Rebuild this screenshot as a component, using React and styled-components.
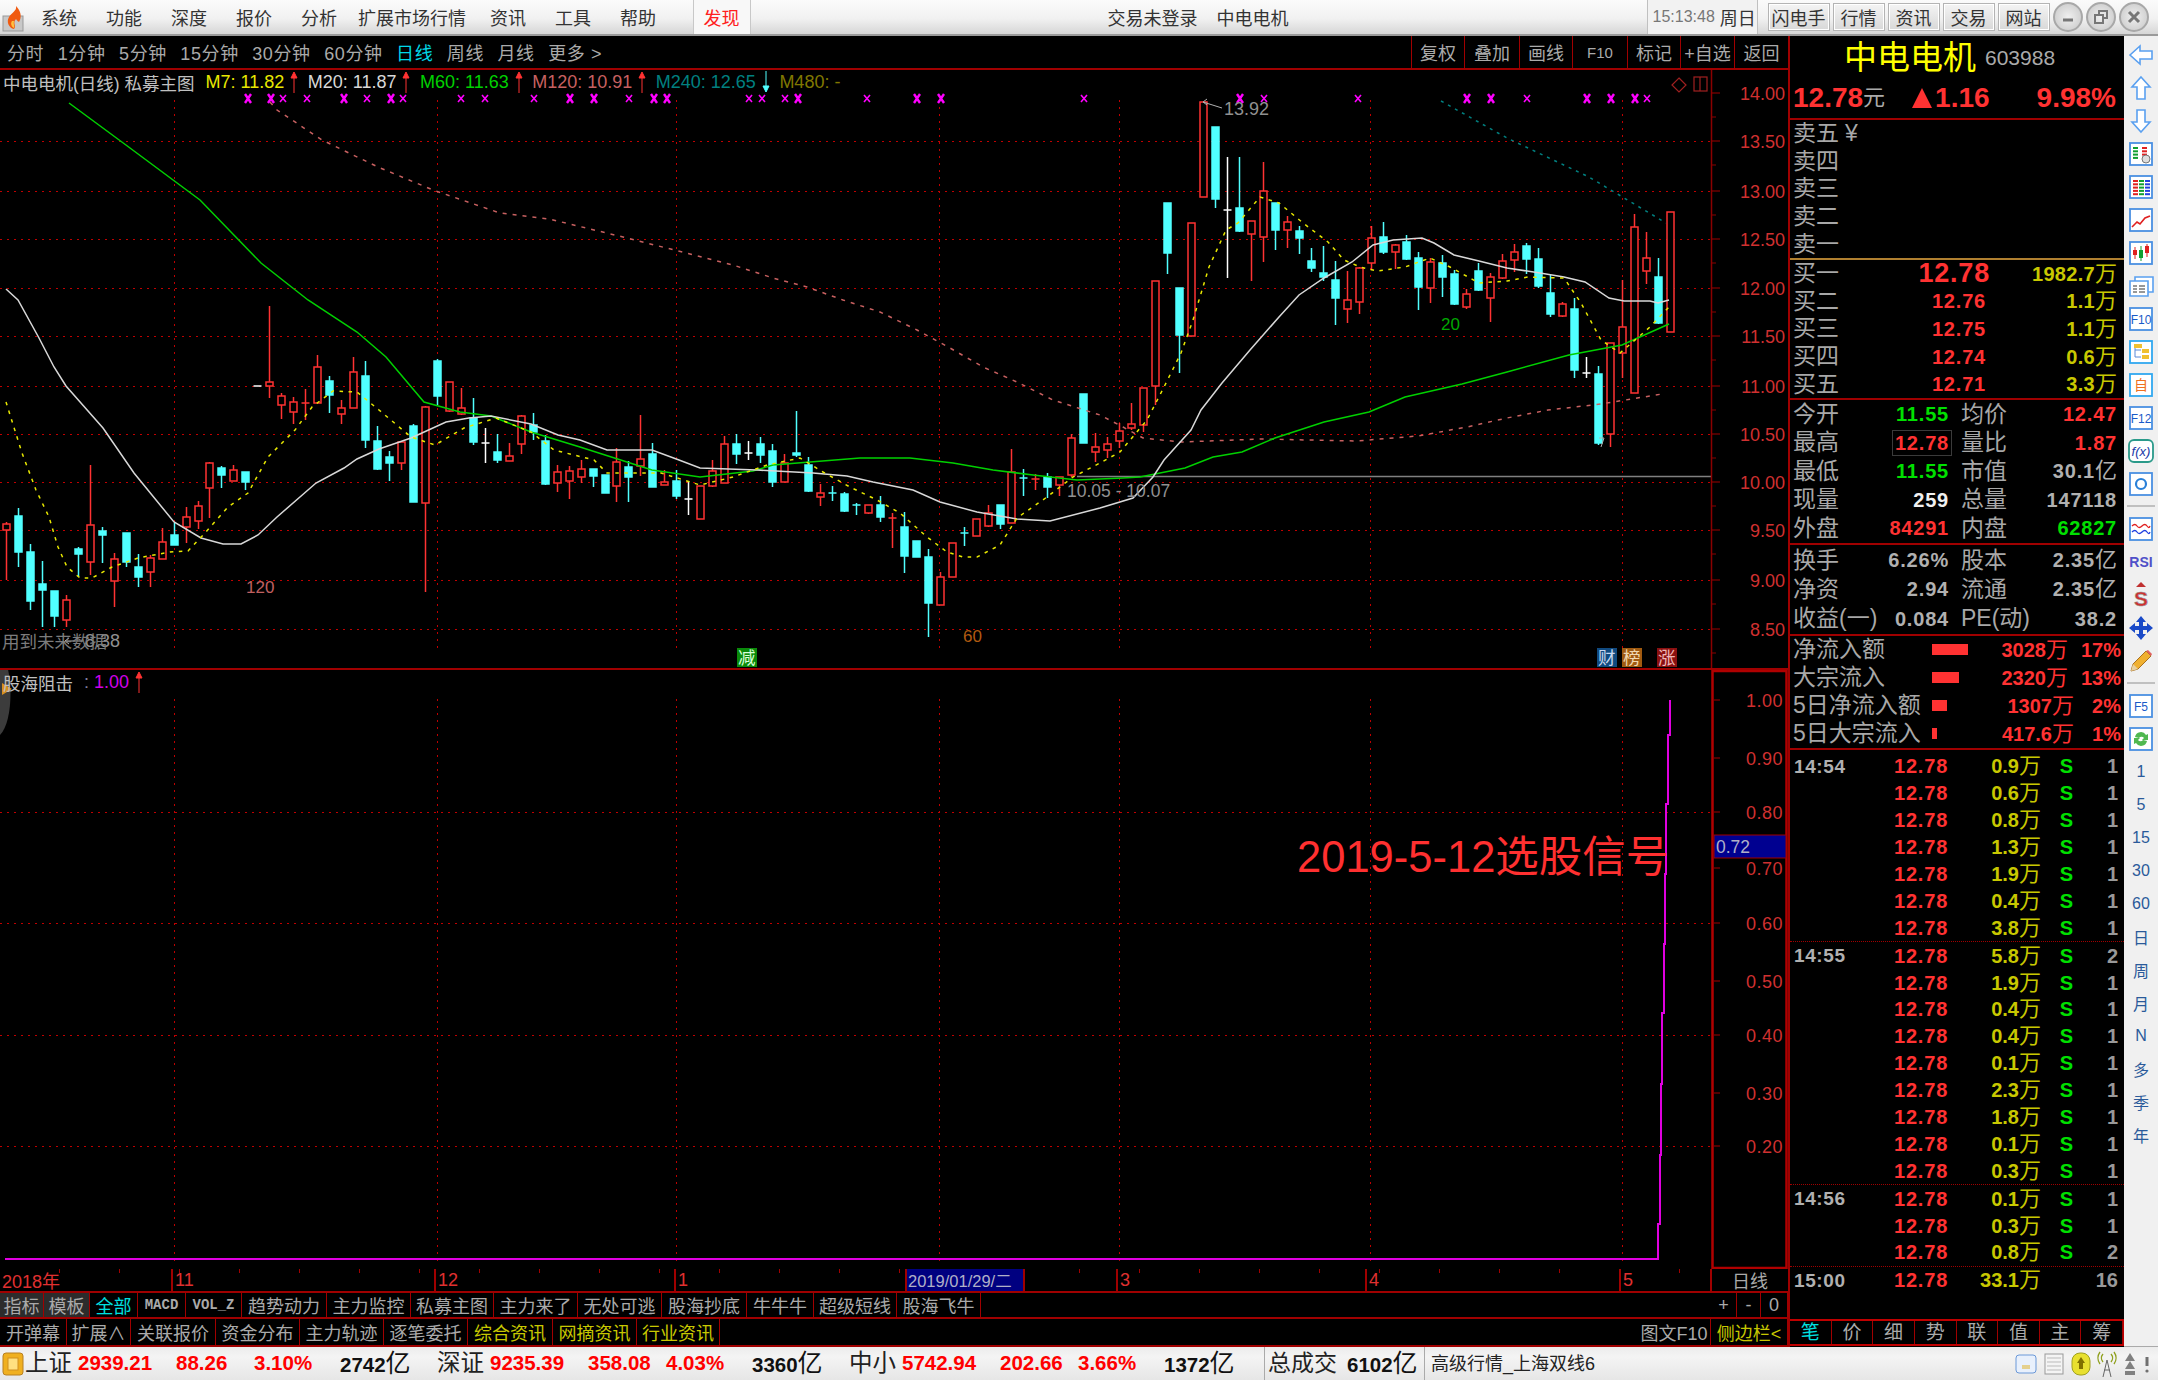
import React from 'react';
import styled, { createGlobalStyle } from 'styled-components';

const SANS = '"Liberation Sans", "Noto Sans CJK SC", sans-serif';
const LINE = '#a00000';
const RED = '#ff3232';
const CYAN = '#50ffff';

const GlobalStyle = createGlobalStyle`
  html, body { margin: 0; padding: 0; background: #000; }
  body { font-family: ${SANS}; overflow: hidden; }
  * { box-sizing: border-box; }
`;

// r = red hollow, c = cyan filled, w = white. [kind, wickTop, bodyTop, bodyBottom, wickBottom]
const CANDLES = [
  ['r',522,524,530,580],['c',508,516,552,567],['c',544,552,601,610],['c',561,584,590,627],['c',591,591,616,627],
  ['r',595,600,620,627],['c',547,549,554,577],['r',465,525,562,575],['c',527,531,535,563],['r',553,559,581,607],
  ['c',533,533,562,567],['c',554,567,577,587],['r',555,558,572,587],['r',528,542,559,559],['c',523,535,545,545],
  ['r',507,517,527,543],['r',501,506,521,529],['r',462,463,488,518],['c',466,468,475,488],['r',465,470,481,481],
  ['c',472,472,482,490],['w',386,386,386,386],['r',306,382,386,398],['r',393,396,405,419],['r',397,402,412,424],
  ['r',389,403,403,420],['r',355,367,403,403],['c',376,381,395,413],['r',400,408,414,424],['r',357,372,408,408],
  ['c',361,376,440,448],['c',426,441,469,470],['c',451,457,463,481],['r',442,442,463,470],['c',424,426,502,502],
  ['r',406,407,503,592],['c',359,361,396,405],['r',382,382,411,412],['r',388,408,414,415],['c',398,418,442,445],
  ['w',428,443,443,463],['c',434,452,460,463],['r',443,456,461,461],['r',415,416,444,454],['c',413,425,432,440],
  ['c',435,441,484,485],['r',465,472,483,492],['r',466,471,481,499],['r',460,469,477,483],['c',469,469,476,487],
  ['c',475,475,493,493],['r',448,462,486,502],['c',461,467,477,502],['r',415,459,466,476],['c',443,454,487,487],
  ['r',470,482,485,485],['c',470,481,496,499],['w',481,499,499,515],['r',486,486,519,519],['r',460,471,486,487],
  ['r',436,444,483,483],['c',434,444,454,464],['w',441,453,453,460],['c',437,444,455,463],['c',444,451,482,487],
  ['r',454,463,482,482],['c',411,453,455,457],['c',457,465,491,492],['r',484,493,497,506],['c',486,493,493,501],
  ['c',492,494,511,512],['c',503,505,505,515],['r',505,505,513,514],['c',496,505,517,522],['r',513,518,518,548],
  ['c',512,527,556,573],['c',541,541,557,557],['c',549,557,603,637],['r',572,577,605,605],['r',543,543,577,577],
  ['c',527,533,533,546],['r',519,519,536,536],['r',505,513,526,527],['c',505,505,524,529],['r',449,472,523,523],
  ['c',469,478,478,496],['r',474,479,479,490],['c',473,477,487,498],['r',477,477,485,496],['r',434,438,475,477],
  ['c',394,394,443,443],['r',433,447,452,462],['r',437,444,450,458],['r',423,431,441,448],['r',403,424,428,430],
  ['r',388,388,425,432],['r',281,281,386,405],['c',203,203,253,274],['c',288,288,335,373],['r',223,223,336,336],
  ['r',102,102,197,197],['c',127,127,199,208],['w',157,210,210,278],['c',157,208,231,232],['r',221,221,234,281],
  ['r',162,191,237,262],['c',203,203,230,250],['r',216,222,230,248],['c',226,231,238,254],['c',248,261,268,272],
  ['c',246,273,277,281],['c',261,280,298,325],['r',271,300,309,323],['r',267,268,302,314],['r',226,238,263,270],
  ['c',222,237,252,254],['r',244,245,252,269],['c',235,242,259,260],['c',252,258,287,310],['r',258,262,288,303],
  ['c',255,263,277,297],['c',270,274,304,305],['r',289,294,307,309],['c',263,271,290,291],['r',273,277,298,322],
  ['r',254,261,278,279],['r',244,252,260,272],['c',243,246,259,274],['c',248,259,286,288],['c',275,293,314,317],
  ['r',302,304,316,317],['c',298,309,370,378],['w',357,373,373,378],['c',366,374,443,445],['r',343,343,434,447],
  ['r',280,327,353,378],['r',214,227,393,393],['r',232,258,271,284],['c',258,277,323,324],['r',212,212,332,332],
];

const M7 = [[6,402],[22,453],[36,490],[49,517],[58,547],[67,567],[80,578],[92,578],[112,567],[138,558],[170,552],[188,551],[205,533],[228,507],[248,493],[268,457],[295,430],[312,407],[333,391],[357,392],[379,410],[411,437],[435,445],[464,428],[496,418],[531,432],[554,450],[594,460],[607,473],[661,473],[700,485],[733,477],[767,465],[800,458],[823,472],[850,487],[877,500],[900,513],[927,537],[947,552],[963,557],[977,557],[1000,545],[1017,518],[1047,497],[1073,477],[1100,463],[1120,452],[1147,420],[1164,387],[1181,353],[1193,320],[1209,267],[1226,230],[1238,223],[1260,197],[1279,203],[1303,223],[1328,242],[1344,260],[1360,267],[1377,271],[1405,267],[1430,258],[1450,267],[1479,283],[1507,281],[1528,277],[1564,278],[1581,303],[1601,340],[1620,353],[1650,327],[1669,307]];
const M20 = [[6,289],[18,300],[39,338],[54,367],[66,386],[103,428],[134,473],[174,522],[201,538],[223,544],[241,544],[258,535],[277,517],[316,483],[344,468],[357,459],[379,449],[411,438],[446,422],[469,418],[491,416],[531,424],[558,435],[580,440],[607,450],[652,450],[679,460],[700,468],[757,470],[813,473],[847,476],[873,482],[913,490],[940,502],[977,512],[1017,519],[1050,521],[1100,508],[1133,498],[1153,477],[1164,460],[1191,430],[1201,410],[1222,383],[1250,350],[1279,317],[1299,295],[1324,278],[1352,262],[1373,245],[1393,240],[1422,238],[1434,243],[1454,255],[1479,261],[1507,268],[1540,273],[1564,277],[1585,282],[1609,298],[1624,301],[1650,301],[1658,303],[1669,300]];
const M60 = [[69,103],[130,148],[200,200],[261,263],[308,300],[357,332],[386,357],[424,402],[460,412],[491,416],[531,432],[580,447],[652,470],[700,477],[753,471],[773,465],[810,462],[860,458],[910,458],[953,463],[993,470],[1033,475],[1077,480],[1123,478],[1140,477],[1185,468],[1213,457],[1242,452],[1275,438],[1324,422],[1369,412],[1405,397],[1462,384],[1507,372],[1569,355],[1622,345],[1669,324]];
const M120 = [[270,102],[277,110],[322,140],[378,167],[433,190],[500,213],[549,219],[623,237],[690,254],[733,265],[773,278],[807,287],[843,300],[880,312],[917,330],[950,348],[983,367],[1017,382],[1053,400],[1100,415],[1123,427],[1143,438],[1181,442],[1262,439],[1356,441],[1418,436],[1467,427],[1507,418],[1548,410],[1601,404],[1662,394]];
const M240 = [[1441,101],[1507,138],[1589,177],[1666,223]];
const SIGNAL = [[5,1259],[1658,1259],[1658,1224],[1660,1224],[1660,1155],[1661,1155],[1661,1084],[1662,1084],[1662,1013],[1664,1013],[1664,944],[1665,944],[1665,874],[1666,874],[1666,804],[1668,804],[1668,735],[1670,735],[1670,700]];

const MARKS = [[248,1],[271,1],[283,0],[307,0],[344,1],[367,0],[391,1],[403,0],[461,0],[485,0],[534,0],[570,1],[594,1],[629,0],[654,1],[667,1],[749,0],[762,0],[785,0],[798,1],[867,0],[917,1],[941,1],[1084,0],[1240,1],[1264,0],[1358,0],[1467,1],[1491,1],[1527,0],[1587,1],[1611,1],[1635,1],[1647,0]];
const GRID_X = [174, 437, 676, 939, 1119, 1370, 1622];
const PRICE_TICKS = [['14.00',93],['13.50',141],['13.00',191],['12.50',239],['12.00',288],['11.50',336],['11.00',386],['10.50',434],['10.00',482],['9.50',530],['9.00',580],['8.50',629]];
const SIGNAL_TICKS = [['1.00',700],['0.90',758],['0.80',812],['0.70',868],['0.60',923],['0.50',981],['0.40',1035],['0.30',1093],['0.20',1146]];

const toPoints = (line) => line.map((p) => p.join(',')).join(' ');

const Candle = ({ data, index }) => {
  const [kind, wickTop, top, bottom, wickBottom] = data;
  const x = Math.round(6 + 11.97 * index) + 0.5;
  const color = kind === 'r' ? RED : kind === 'c' ? CYAN : '#ffffff';
  const w = 3.5;
  if (top === bottom) {
    return (
      <g stroke={color} strokeWidth="1.5">
        <line x1={x} x2={x} y1={wickTop} y2={wickBottom} />
        <line x1={x - w - 0.5} x2={x + w + 0.5} y1={top} y2={top} />
      </g>
    );
  }
  return (
    <g stroke={color} strokeWidth="1.5">
      <line x1={x} x2={x} y1={wickTop} y2={top} />
      <line x1={x} x2={x} y1={bottom} y2={wickBottom} />
      <rect
        x={x - w}
        y={top}
        width={w * 2}
        height={bottom - top}
        fill={kind === 'r' ? '#000' : color}
      />
    </g>
  );
};

const Root = styled.div`
  width: 2158px;
  height: 1380px;
  display: flex;
  flex-direction: column;
  background: #000;
`;

/* top menu */
const MenuBar = styled.header`
  height: 36px;
  display: flex;
  align-items: stretch;
  background: linear-gradient(#fbfbfb, #f1f1f1 55%, #d6d6d6);
  border-bottom: 2px solid #9a9a9a;
  color: #333;
  font-size: 18px;
`;
const LogoBox = styled.div`
  width: 26.5px;
  padding: 6px 0 0 2px;
`;
const MenuItem = styled.div`
  display: flex;
  align-items: center;
  padding: 0 ${(p) => p.$right ?? 14.5}px 0 ${(p) => p.$left ?? 14.5}px;
  white-space: nowrap;
`;
const Discover = styled(MenuItem)`
  margin-left: 22px;
  padding: 0 10px;
  width: 58px;
  color: #ff2020;
  background: #f8f8f8;
  border-left: 1px solid #c8c8c8;
  border-right: 1px solid #c8c8c8;
`;
const Title = styled.div`
  margin-left: 357px;
  width: 539px;
  display: flex;
  align-items: center;
  gap: 19px;
  white-space: nowrap;
`;
const Clock = styled.div`
  width: 111px;
  display: flex;
  align-items: center;
  gap: 5px;
  padding-left: 5px;
  border-left: 1px solid #c0c0c0;
  border-right: 1px solid #c0c0c0;
  background: #f2f2f2;
  span { color: #777; font-size: 16px; }
`;
const RaisedGroup = styled.div`
  margin-left: 10px;
  display: flex;
  align-items: center;
  gap: 3px;
`;
const Raised = styled.div`
  width: ${(p) => p.$w}px;
  height: 28px;
  display: flex;
  align-items: center;
  justify-content: center;
  background: linear-gradient(#f4f4f4, #d8d8d8);
  border: 1px solid #b4b4b4;
  box-shadow: inset 0 0 0 1px #fff;
`;
const WindowGroup = styled.div`
  margin-left: 3px;
  display: flex;
  align-items: center;
  gap: 3px;
`;
const WindowBtn = styled.div`
  width: 30px;
  height: 30px;
  border-radius: 50%;
  display: flex;
  align-items: center;
  justify-content: center;
  background: radial-gradient(#f0f0f0, #c6c6c6);
  border: 2px solid #a8a8a8;
`;

/* body */
const Body = styled.div`
  height: 1311px;
  display: flex;
`;
const Workspace = styled.section`
  width: 1788px;
  display: flex;
  flex-direction: column;
`;
const PeriodBar = styled.div`
  height: 34px;
  display: flex;
  justify-content: space-between;
  border-bottom: 2px solid ${LINE};
  font-size: 18px;
  color: #aaa;
`;
const Periods = styled.div`
  display: flex;
  align-items: center;
  gap: 13.5px;
  padding-left: 7px;
  letter-spacing: 0.6px;
`;
const Period = styled.span`
  color: ${(p) => (p.$active ? '#00d8e8' : '#aaa')};
  white-space: nowrap;
`;
const ChartTools = styled.div`
  display: flex;
`;
const ChartTool = styled.div`
  width: ${(p) => p.$w}px;
  display: flex;
  align-items: center;
  justify-content: center;
  border-left: 1px solid ${LINE};
  white-space: nowrap;
  font-size: ${(p) => (p.$small ? 15 : 18)}px;
`;
const Pane = styled.div`
  position: relative;
  height: ${(p) => p.$h}px;
  border-bottom: ${(p) => (p.$ruled ? `2px solid ${LINE}` : 'none')};
`;
const PaneSvg = styled.svg`
  display: block;
  width: 1788px;
  height: 100%;
  text {
    font-family: ${SANS};
  }
`;
const Legend = styled.div`
  position: absolute;
  left: 3px;
  top: 1px;
  height: 22px;
  display: flex;
  align-items: center;
  font-size: 18px;
  white-space: nowrap;
`;
const LegendTitle = styled.span`
  color: #c0c0c0;
  font-size: 17.5px;
  margin-right: 11px;
`;
const LegendValue = styled.span`
  color: ${(p) => p.$color};
  margin-right: ${(p) => p.$after || 0}px;
`;
const ArrowSvg = styled.svg`
  width: 8px;
  height: 22px;
  margin: 0 9.5px 0 6px;
`;
const SignalText = styled.div`
  position: absolute;
  left: 1297px;
  top: 162px;
  color: #ff3030;
  font-size: 43.5px;
  line-height: 50px;
  white-space: nowrap;
`;
const FutureNote = styled.div`
  position: absolute;
  left: 2px;
  top: 558px;
  color: #7c7c7c;
  font-size: 17.5px;
  white-space: nowrap;
`;

const DateAxis = styled.div`
  height: 24px;
  display: flex;
  border-bottom: 2px solid ${LINE};
  background: repeating-linear-gradient(90deg, transparent 0 59px, ${LINE} 59px 60px) 0 0 / 1711px 4px no-repeat;
`;
const DateCell = styled.div`
  width: ${(p) => p.$w}px;
  padding-left: 2px;
  display: flex;
  align-items: center;
  color: #e03030;
  font-size: 18px;
  white-space: nowrap;
  border-right: 2px solid ${LINE};
`;
const DateSelected = styled(DateCell)`
  background: #000080;
  color: #b0b0c8;
  font-size: 16.5px;
  padding-left: 1px;
`;
const AxisName = styled(DateCell)`
  color: #aaa;
  justify-content: center;
  padding: 0;
  border-right: none;
`;
const TabRow = styled.div`
  height: ${(p) => p.$h}px;
  display: flex;
  justify-content: space-between;
  border-bottom: 2px solid ${LINE};
`;
const TabGroup = styled.div`
  display: flex;
`;
const Tab = styled.div`
  width: ${(p) => p.$w}px;
  display: flex;
  align-items: center;
  justify-content: center;
  font-family: ${(p) => (p.$small ? '"Liberation Mono", monospace' : 'inherit')};
  font-size: ${(p) => (p.$small ? 14 : 18)}px;
  font-weight: ${(p) => (p.$small ? 700 : 400)};
  white-space: nowrap;
  color: ${(p) => (p.$tone === 'cyan' ? '#00e0e0' : p.$tone === 'yellow' ? '#c8c800' : '#aaa')};
  background: ${(p) => (p.$tone === 'dim' ? '#2c2c2c' : 'transparent')};
  border-right: 1px solid ${LINE};
`;

/* quote panel */
const QuotePanel = styled.aside`
  width: 336px;
  display: flex;
  flex-direction: column;
  border-left: 2px solid ${LINE};
  color: #a8a8a8;
  font-size: 23px;
  line-height: 1;
`;
const NameRow = styled.div`
  height: 42px;
  padding-left: 54px;
  display: flex;
  align-items: center;
  gap: 9px;
  color: #ffff00;
  font-size: 33px;
  white-space: nowrap;
  b { color: #aaa; font-size: 21px; font-weight: 400; }
`;
const PriceRow = styled.div`
  height: 42px;
  padding-left: 3px;
  display: flex;
  align-items: center;
  border-bottom: 2px solid ${LINE};
  color: ${RED};
  font-size: 28px;
  font-weight: 700;
  white-space: nowrap;
`;
const PriceUnit = styled.span`
  color: #aaa;
  font-size: 22px;
  font-weight: 400;
  margin-right: 27px;
`;
const UpTriangle = styled.i`
  width: 0;
  height: 0;
  margin-right: 3px;
  border-left: 10px solid transparent;
  border-right: 10px solid transparent;
  border-bottom: 20px solid ${RED};
`;
const PriceRight = styled.span`
  margin-left: 47px;
`;
const Book = styled.div`
  padding: 0 7px 0 3px;
  border-bottom: 2px solid ${(p) => p.$rule};
`;
const BookRow = styled.div`
  height: 27.6px;
  display: grid;
  grid-template-columns: 52px 141px 1fr;
  align-items: center;
  white-space: nowrap;
`;
const BookPrice = styled.div`
  text-align: right;
  color: ${RED};
  font-weight: 700;
  font-size: ${(p) => (p.$big ? 27 : 20)}px;
  letter-spacing: 0.8px;
  margin-right: ${(p) => (p.$big ? -4 : 0)}px;
`;
const BookVolume = styled.div`
  text-align: right;
  color: #c8c800;
  font-weight: 700;
  font-size: 20px;
  letter-spacing: 0.3px;
`;
const Unit = styled.span`
  font-weight: 400;
  font-size: 22px;
  letter-spacing: 0;
`;
const Stats = styled.div`
  height: ${(p) => p.$h}px;
  padding-left: 3px;
  display: grid;
  grid-template-columns: 156px 156px;
  column-gap: 12px;
  align-content: space-evenly;
  border-bottom: 2px solid ${LINE};
`;
const StatCell = styled.div`
  height: 28px;
  display: flex;
  justify-content: space-between;
  align-items: center;
  white-space: nowrap;
`;
const StatValue = styled.span`
  color: ${(p) => p.$color || '#b0b0b0'};
  font-size: 20px;
  font-weight: 700;
  letter-spacing: 0.8px;
  outline: ${(p) => (p.$boxed ? '1px solid #3a3a3a' : 'none')};
  outline-offset: 2px;
`;
const Flows = styled.div`
  height: 114px;
  padding: 0 3px;
  display: grid;
  align-content: space-evenly;
  border-bottom: 2px solid ${LINE};
`;
const FlowRow = styled.div`
  height: 28px;
  display: flex;
  align-items: center;
  white-space: nowrap;
`;
const FlowLabel = styled.div`
  width: 139px;
  span { font-weight: 700; font-size: 20px; }
`;
const FlowBar = styled.div`
  width: 40px;
  height: 11px;
  div { height: 100%; background: ${RED}; }
`;
const FlowAmount = styled.div`
  width: ${(p) => (p.$wide ? 102 : 96)}px;
  text-align: right;
  color: ${RED};
  font-size: 20px;
  font-weight: 700;
`;
const FlowPct = styled.div`
  flex: 1;
  text-align: right;
  color: ${RED};
  font-size: 20px;
  font-weight: 700;
`;
const TickList = styled.div`
  flex: 1;
  padding-top: 3px;
`;
const TickGroup = styled.div`
  padding: 0 6px 0 4px;
  border-bottom: ${(p) => (p.$last ? 'none' : `1px dotted ${LINE}`)};
`;
const TickRow = styled.div`
  height: 26.9px;
  display: grid;
  grid-template-columns: 102px 52px 93px 32px 1fr;
  align-items: center;
  font-size: 20px;
  font-weight: 700;
  white-space: nowrap;
`;
const TickTime = styled.div`
  color: #b0b0b0;
  font-size: 19px;
  letter-spacing: 0.6px;
`;
const TickPrice = styled.div`
  color: ${RED};
  letter-spacing: 0.8px;
  margin-left: -2px;
`;
const TickVolume = styled.div`
  text-align: right;
  color: #c8c800;
`;
const TickSide = styled.div`
  text-align: right;
  color: #00e000;
`;
const TickCount = styled.div`
  text-align: right;
  color: #999;
`;
const PanelTabs = styled.div`
  height: 27px;
  margin-bottom: 1px;
  display: flex;
  border-top: 2px solid #c00000;
  border-bottom: 2px solid #c00000;
  border-right: 1px solid #c00000;
`;
const PanelTab = styled.div`
  flex: 1;
  display: flex;
  align-items: center;
  justify-content: center;
  font-size: 19px;
  color: ${(p) => (p.$active ? '#00e0e0' : '#aaa')};
  border-right: 1px solid ${LINE};
`;

/* right icon strip */
const SideTools = styled.nav`
  width: 34px;
  padding-top: 2px;
  background: #f0f0f0;
  border-bottom: 1px solid #aaa;
`;
const SideItem = styled.div`
  height: 33px;
  display: flex;
  align-items: center;
  justify-content: center;
  color: #2a5a9a;
  font-size: 16px;
  svg { display: block; }
  svg text { font-family: ${SANS}; }
`;
const SideRule = styled.div`
  height: 12px;
  display: flex;
  align-items: center;
  &::after { content: ''; width: 100%; margin: 0 3px; border-top: 2px solid #c0c0c0; }
`;

/* status bar */
const StatusBar = styled.footer`
  height: 33px;
  padding-left: 2px;
  display: flex;
  align-items: center;
  background: linear-gradient(#ececec, #f4f4f4 30%, #e6e6e6);
  color: #222;
  white-space: nowrap;
  line-height: 1;
`;
const IndexBlock = styled.div`
  display: grid;
  grid-template-columns: 53px 98px 78px 86px 97px;
  align-items: center;
  font-weight: 700;
  font-size: 20.5px;
`;
const IndexName = styled.span`
  font-size: 23.5px;
  font-weight: 400;
`;
const RedNum = styled.span`
  color: #ff0000;
`;
const DarkNum = styled.span`
  color: #111;
  font-weight: 700;
  font-size: 20.5px;
  span { font-weight: 400; font-size: 25px; }
`;
const TotalBlock = styled.div`
  display: flex;
  align-items: center;
  gap: 10px;
  width: 161px;
  padding-left: 3px;
  height: 100%;
  font-size: 23px;
  border-left: 1px solid #aaa;
  border-right: 1px solid #aaa;
  margin-left: 3px;
`;
const FeedName = styled.div`
  margin-left: 6px;
  width: 584px;
  font-size: 18px;
`;
const Tray = styled.div`
  display: flex;
  align-items: center;
  gap: 6px;
`;

const Logo = () => (
  <svg width="24" height="26" viewBox="0 0 24 26">
    <rect x="1" y="10" width="20" height="15" fill="#c8c8c8" stroke="#999" />
    <path d="M14 0c1 5-4 6-7 11-3 5 0 11 5 12 3-3-2-6 2-10 1 2 3 3 3 3 3-5 2-11-3-16z" fill="#f05a10" />
    <path d="M10 15c-2 3 0 6 2 7 1-2-1-4 0-7z" fill="#ffc040" />
  </svg>
);

const Arrow = ({ up = true }) => (
  <ArrowSvg viewBox="0 0 8 22">
    {up ? (
      <g fill={RED} stroke={RED}>
        <path d="M4 7V22" fill="none" />
        <path d="M4 1L7 7H1z" />
      </g>
    ) : (
      <g fill={CYAN} stroke={CYAN}>
        <path d="M4 0V15" fill="none" />
        <path d="M4 21L7 15H1z" />
      </g>
    )}
  </ArrowSvg>
);

const MainChart = () => (
  <PaneSvg viewBox="0 70 1788 598" preserveAspectRatio="none">
    <g stroke="#c00000" strokeDasharray="2 5" shapeRendering="crispEdges">
      {PRICE_TICKS.slice(1).map(([label, y]) => (
        <line key={label} x1="0" x2="1711" y1={y} y2={y} />
      ))}
      {GRID_X.map((x) => (
        <line key={x} x1={x} x2={x} y1="100" y2="648" />
      ))}
    </g>
    <line x1="1077" x2="1712" y1="476.5" y2="476.5" stroke="#808080" strokeWidth="1.5" />
    {CANDLES.map((c, i) => (
      <Candle key={i} data={c} index={i} />
    ))}
    <polyline points={toPoints(M120)} fill="none" stroke="#c86060" strokeWidth="1.5" strokeDasharray="4 6" />
    <polyline points={toPoints(M240)} fill="none" stroke="#008080" strokeWidth="1.5" strokeDasharray="3 5" />
    <polyline points={toPoints(M60)} fill="none" stroke="#00d000" strokeWidth="1.5" />
    <polyline points={toPoints(M20)} fill="none" stroke="#d8d8d8" strokeWidth="1.5" />
    <polyline points={toPoints(M7)} fill="none" stroke="#e8e800" strokeWidth="1.5" strokeDasharray="3.5 5.5" />
    <g stroke="#ff00ff">
      {MARKS.map(([x, big]) => (
        <path
          key={x}
          strokeWidth={big ? 2.4 : 1.6}
          d={`M${x - 3} ${big ? 94 : 95}L${x + 3} ${big ? 103 : 102}M${x + 3} ${big ? 94 : 95}L${x - 3} ${big ? 103 : 102}`}
        />
      ))}
    </g>
    <g fill="#909090" fontSize="18">
      <text x="1224" y="115">13.92</text>
      <text x="1067" y="497" fontSize="17.5">10.05 - 10.07</text>
      <text x="85" y="647">8.38</text>
    </g>
    <g stroke="#b0b0b0" fill="none">
      <path d="M1222 108L1203 102M1203 102l4-3M1203 102l4 3" />
      <path d="M1601 447l3-9h-5M83 641H65M65 641l4-3M65 641l4 3" />
    </g>
    <text x="246" y="593" fill="#c06060" fontSize="17">120</text>
    <text x="963" y="642" fill="#b05a10" fontSize="17">60</text>
    <text x="1441" y="330" fill="#00a800" fontSize="17">20</text>
    {[
      [737, '#0a8a0a', '减', '#d8ffd8'],
      [1597, '#104a80', '财', '#c8d8f0'],
      [1622, '#a05a10', '榜', '#f0d8b0'],
      [1657, '#8a1010', '涨', '#f0b8b8'],
    ].map(([x, bg, label, fg]) => (
      <g key={x}>
        <rect x={x} y="648" width="20" height="19" fill={bg} />
        <text x={x + 1} y="664" fontSize="17.5" fill={fg}>{label}</text>
      </g>
    ))}
    <g fill="none" stroke="#a02020" strokeWidth="1.2">
      <path d="M1679 78l7 7-7 7-7-7z" />
      <rect x="1694" y="77" width="13" height="14" />
      <path d="M1700 77v14" />
    </g>
    <line x1="1711.5" x2="1711.5" y1="70" y2="668" stroke="#8a0000" strokeWidth="1.5" />
    {PRICE_TICKS.map(([label, y]) => (
      <g key={label}>
        <line x1="1712" x2="1720" y1={y} y2={y} stroke="#a00000" />
        <line x1="1712" x2="1716" y1={y + 24} y2={y + 24} stroke="#8a0000" />
        <text x="1785" y={y + 7} textAnchor="end" fontSize="18" fill="#d03030">{label}</text>
      </g>
    ))}
  </PaneSvg>
);

const SignalChart = () => (
  <PaneSvg viewBox="0 670 1788 599" preserveAspectRatio="none">
    <g stroke="#c00000" strokeDasharray="2 5" shapeRendering="crispEdges">
      {[812, 923, 1035, 1146].map((y) => (
        <line key={y} x1="0" x2="1711" y1={y} y2={y} />
      ))}
      {GRID_X.map((x) => (
        <line key={x} x1={x} x2={x} y1="699" y2="1264" />
      ))}
    </g>
    <polyline points={toPoints(SIGNAL)} fill="none" stroke="#e000e0" strokeWidth="2" />
    <path d="M0 651c14 16 14 70 0 84z" fill="#3c3c3c" />
    <path d="M2 683l10 6-10 6z" fill="#d89020" />
    <rect x="1712.5" y="671" width="74" height="597" fill="none" stroke="#b00000" strokeWidth="2.5" />
    {SIGNAL_TICKS.map(([label, y]) => (
      <g key={label}>
        <line x1="1714" x2="1720" y1={y} y2={y} stroke="#a00000" />
        <text x="1783" y={y + 7} textAnchor="end" fontSize="18" letterSpacing="0.5" fill="#d03030">{label}</text>
      </g>
    ))}
    <rect x="1714" y="835" width="72" height="23" fill="#000090" stroke="#a00000" />
    <text x="1716" y="853" fontSize="17.5" fill="#b0b0c8">0.72</text>
  </PaneSvg>
);

const Box = ({ children, stroke = '#4a90e2' }) => (
  <svg width="24" height="24" viewBox="0 0 24 24">
    <rect x="1" y="1" width="22" height="22" fill="#fff" stroke={stroke} strokeWidth="1.8" />
    {children}
  </svg>
);
const Plain = ({ children }) => <svg width="26" height="26" viewBox="0 0 26 26">{children}</svg>;
const BoxLabel = ({ children, color = '#1a5ac8', size = 12 }) => (
  <text x="12" y="16.5" fontSize={size} textAnchor="middle" fill={color}>{children}</text>
);
const Bars = ({ x, colors }) =>
  colors.map((c, i) => <rect key={i} x={x} y={5 + i * 3.3} width="5" height="2" fill={c} />);

const SIDE_ICONS = [
  <Plain><path d="M2 13l10-9v5h12v8H12v5z" fill="#fff" stroke="#5aa0f0" strokeWidth="1.6" /></Plain>,
  <Plain><path d="M13 2l9 10h-5v12H9V12H4z" fill="#fff" stroke="#5aa0f0" strokeWidth="1.6" /></Plain>,
  <Plain><path d="M13 24l9-10h-5V2H9v12H4z" fill="#fff" stroke="#5aa0f0" strokeWidth="1.6" /></Plain>,
  <Box><Bars x={4} colors={['#10a030', '#10a030', '#10a030', '#10a030']} /><Bars x={13} colors={['#e02020', '#e02020', '#e02020']} /><circle cx="17" cy="17" r="4" fill="#ddd" stroke="#777" /></Box>,
  <Box><Bars x={4} colors={['#e02020', '#e02020', '#e02020', '#e02020', '#e02020']} /><Bars x={10} colors={['#10a030', '#10a030', '#10a030', '#10a030', '#10a030']} /><Bars x={16} colors={['#2040e0', '#2040e0', '#2040e0', '#2040e0', '#2040e0']} /></Box>,
  <Box><path d="M3 19l5-5 3 2 5-6 5-2" fill="none" stroke="#e02020" strokeWidth="1.6" /></Box>,
  <Box>
    <path d="M6 6v12" stroke="#e02020" /><rect x="4" y="9" width="4" height="5" fill="#e02020" />
    <path d="M12 5v15" stroke="#10a030" /><rect x="10" y="9" width="4" height="8" fill="#10a030" />
    <path d="M18 3v13" stroke="#e02020" /><rect x="16" y="5" width="4" height="7" fill="#e02020" />
  </Box>,
  <Plain>
    <path d="M7 4h18v15H7z" fill="#fff" stroke="#5aa0f0" strokeWidth="1.6" />
    <path d="M2 8h18v15H2z" fill="#fff" stroke="#5aa0f0" strokeWidth="1.6" />
    <path d="M5 13h4M11 13h6M5 16h4M11 16h6M5 19h4M11 19h6" stroke="#777" strokeWidth="1.5" />
  </Plain>,
  <Box><BoxLabel>F10</BoxLabel></Box>,
  <Box stroke="#30a8f0">
    <path d="M6 4v13h6M6 10h6" fill="none" stroke="#5a8ad8" />
    <rect x="5" y="4" width="8" height="4" fill="#f0c030" /><rect x="13" y="9" width="7" height="4" fill="#f0c030" /><rect x="13" y="15" width="7" height="4" fill="#f0c030" />
  </Box>,
  <Box stroke="#30a8f0"><BoxLabel color="#f07020" size={14}>自</BoxLabel></Box>,
  <Box><BoxLabel>F12</BoxLabel></Box>,
  <svg width="26" height="24" viewBox="0 0 26 24"><rect x="1" y="1" width="24" height="22" rx="5" fill="#fff" stroke="#2a9a8a" strokeWidth="1.8" /><text x="13" y="17" fontSize="13" fontStyle="italic" textAnchor="middle" fill="#1a3aa8">f(x)</text></svg>,
  <Box><circle cx="12" cy="12" r="5" fill="none" stroke="#2a80d8" strokeWidth="2.2" /></Box>,
  null,
  <Box><path d="M3 9q3-3 5 0t5 0 5 0 3 0" fill="none" stroke="#e02020" strokeWidth="1.3" /><path d="M3 15q3-3 5 0t5 0 5 0 3 0" fill="none" stroke="#2040e0" strokeWidth="1.3" /></Box>,
  <svg width="30" height="20" viewBox="0 0 30 20"><text x="15" y="15" fontSize="14" fontWeight="700" textAnchor="middle" fill="#5050c8">RSI</text></svg>,
  <svg width="26" height="28" viewBox="0 0 26 28"><path d="M13 1l5 5H8z" fill="#c03030" /><text x="13" y="25" fontSize="21" fontWeight="700" textAnchor="middle" fill="#d03030" stroke="#999" strokeWidth="0.6">S</text></svg>,
  <Plain><path d="M13 1l5 6h-3v4h4V8l6 5-6 5v-3h-4v4h3l-5 6-5-6h3v-4H7v3l-6-5 6-5v3h4V7H8z" fill="#1a4ac8" /></Plain>,
  <Plain><path d="M3 23l2-7L18 3l5 5L10 21z" fill="#f0b030" stroke="#a87020" /><path d="M3 23l2-7 5 5z" fill="#e8d0a0" /><path d="M18 3l5 5 1-2-4-4z" fill="#e06060" /></Plain>,
  null,
  <Box><BoxLabel>F5</BoxLabel></Box>,
  <Box><path d="M6 10a6 6 0 0 1 11-2l2-1v6h-6l2-2a3 3 0 0 0-5 0zM18 14a6 6 0 0 1-11 2l-2 1v-6h6l-2 2a3 3 0 0 0 5 0z" fill="#50b850" /></Box>,
];
const SIDE_LABELS = ['1', '5', '15', '30', '60', '日', '周', '月', 'N', '多', '季', '年'];

const SELLS = ['卖五', '卖四', '卖三', '卖二', '卖一'];
const BUYS = [
  ['买一', '12.78', '1982.7', true],
  ['买二', '12.76', '1.1'],
  ['买三', '12.75', '1.1'],
  ['买四', '12.74', '0.6'],
  ['买五', '12.71', '3.3'],
];
const GREEN = '#00e000';
const STATS_A = [
  ['今开', '11.55', GREEN], ['均价', '12.47', RED],
  ['最高', '12.78', RED, true], ['量比', '1.87', RED],
  ['最低', '11.55', GREEN], ['市值', '30.1', null, false, '亿'],
  ['现量', '259', '#f0f0f0'], ['总量', '147118'],
  ['外盘', '84291', RED], ['内盘', '62827', GREEN],
];
const STATS_B = [
  ['换手', '6.26%'], ['股本', '2.35', null, false, '亿'],
  ['净资', '2.94'], ['流通', '2.35', null, false, '亿'],
  ['收益(一)', '0.084'], ['PE(动)', '38.2'],
];
const FLOWS = [
  ['净流入额', 36, '3028', '17%'],
  ['大宗流入', 27, '2320', '13%'],
  ['5日净流入额', 15, '1307', '2%', true],
  ['5日大宗流入', 5, '417.6', '1%', true],
];
const TICKS = [
  ['14:54', [['0.9', 1], ['0.6', 1], ['0.8', 1], ['1.3', 1], ['1.9', 1], ['0.4', 1], ['3.8', 1]]],
  ['14:55', [['5.8', 2], ['1.9', 1], ['0.4', 1], ['0.4', 1], ['0.1', 1], ['2.3', 1], ['1.8', 1], ['0.1', 1], ['0.3', 1]]],
  ['14:56', [['0.1', 1], ['0.3', 1], ['0.8', 2]]],
  ['15:00', [['33.1', 16, true]]],
];
const TAB_ROW_ONE = [
  ['指标', 44, 'dim'], ['模板', 46, 'dim'], ['全部', 48, 'cyan'], ['MACD', 48, null, true], ['VOL_Z', 56, null, true],
  ['趋势动力', 85], ['主力监控', 84], ['私募主图', 83], ['主力来了', 84], ['无处可逃', 84], ['股海抄底', 85],
  ['牛牛牛', 67], ['超级短线', 83], ['股海飞牛', 84],
];
const TAB_ROW_TWO = [
  ['开弹幕', 67], ['扩展∧', 64], ['关联报价', 85], ['资金分布', 84], ['主力轨迹', 84], ['逐笔委托', 84],
  ['综合资讯', 85, 'yellow'], ['网摘资讯', 84, 'yellow'], ['行业资讯', 83, 'yellow'],
];
const INDEXES = [
  ['上证', '2939.21', '88.26', '3.10%', '2742'],
  ['深证', '9235.39', '358.08', '4.03%', '3360'],
  ['中小', '5742.94', '202.66', '3.66%', '1372'],
];

const StatGrid = ({ rows, h }) => (
  <Stats $h={h}>
    {rows.map(([label, value, color, boxed, unit]) => (
      <StatCell key={label}>
        {label}
        <StatValue $color={color} $boxed={boxed}>
          {value}
          {unit && <Unit>{unit}</Unit>}
        </StatValue>
      </StatCell>
    ))}
  </Stats>
);

const App = () => (
  <Root>
    <GlobalStyle />
    <MenuBar>
      <LogoBox><Logo /></LogoBox>
      <MenuItem>系统</MenuItem>
      <MenuItem>功能</MenuItem>
      <MenuItem>深度</MenuItem>
      <MenuItem>报价</MenuItem>
      <MenuItem $right={10}>分析</MenuItem>
      <MenuItem $left={11} $right={11}>扩展市场行情</MenuItem>
      <MenuItem $left={13}>资讯</MenuItem>
      <MenuItem>工具</MenuItem>
      <MenuItem>帮助</MenuItem>
      <Discover>发现</Discover>
      <Title>
        <span>交易未登录</span>
        <span>中电电机</span>
      </Title>
      <Clock><span>15:13:48</span>周日</Clock>
      <RaisedGroup>
        <Raised $w={62}>闪电手</Raised>
        <Raised $w={52}>行情</Raised>
        <Raised $w={52}>资讯</Raised>
        <Raised $w={52}>交易</Raised>
        <Raised $w={52}>网站</Raised>
      </RaisedGroup>
      <WindowGroup>
        <WindowBtn><svg width="14" height="14" viewBox="0 0 14 14"><path d="M2 10h10" stroke="#777" strokeWidth="3" /></svg></WindowBtn>
        <WindowBtn><svg width="14" height="14" viewBox="0 0 14 14"><path d="M5 4V1h8v7h-3M1 5h8v8H1z" fill="none" stroke="#777" strokeWidth="2" /></svg></WindowBtn>
        <WindowBtn><svg width="14" height="14" viewBox="0 0 14 14"><path d="M2 2l10 10M12 2L2 12" stroke="#777" strokeWidth="3" /></svg></WindowBtn>
      </WindowGroup>
    </MenuBar>
    <Body>
      <Workspace>
        <PeriodBar>
          <Periods>
            {['分时', '1分钟', '5分钟', '15分钟', '30分钟', '60分钟'].map((t) => <Period key={t}>{t}</Period>)}
            <Period $active>日线</Period>
            <Period>周线</Period>
            <Period>月线</Period>
            <Period>更多 &gt;</Period>
          </Periods>
          <ChartTools>
            <ChartTool $w={53}>复权</ChartTool>
            <ChartTool $w={55}>叠加</ChartTool>
            <ChartTool $w={53}>画线</ChartTool>
            <ChartTool $w={55} $small>F10</ChartTool>
            <ChartTool $w={53}>标记</ChartTool>
            <ChartTool $w={54}>+自选</ChartTool>
            <ChartTool $w={54}>返回</ChartTool>
          </ChartTools>
        </PeriodBar>
        <Pane $h={600} $ruled>
          <MainChart />
          <Legend>
            <LegendTitle>中电电机(日线) 私募主图</LegendTitle>
            <LegendValue $color="#e8e800">M7: 11.82</LegendValue><Arrow />
            <LegendValue $color="#d8d8d8">M20: 11.87</LegendValue><Arrow />
            <LegendValue $color="#00d000">M60: 11.63</LegendValue><Arrow />
            <LegendValue $color="#c86060">M120: 10.91</LegendValue><Arrow />
            <LegendValue $color="#008080">M240: 12.65</LegendValue><Arrow up={false} />
            <LegendValue $color="#807800">M480: -</LegendValue>
          </Legend>
          <FutureNote>用到未来数据</FutureNote>
        </Pane>
        <Pane $h={599}>
          <SignalChart />
          <Legend>
            <LegendTitle>股海阻击</LegendTitle>
            <LegendValue $color="#8080a0" $after={5}>:</LegendValue>
            <LegendValue $color="#d000e8">1.00</LegendValue><Arrow />
          </Legend>
          <SignalText>2019-5-12选股信号</SignalText>
        </Pane>
        <DateAxis>
          <DateCell $w={173}>2018年</DateCell>
          <DateCell $w={263}>11</DateCell>
          <DateCell $w={240}>12</DateCell>
          <DateCell $w={231}>1</DateCell>
          <DateSelected $w={118}>2019/01/29/二</DateSelected>
          <DateCell $w={93} />
          <DateCell $w={249}>3</DateCell>
          <DateCell $w={254}>4</DateCell>
          <DateCell $w={91}>5</DateCell>
          <AxisName $w={76}>日线</AxisName>
        </DateAxis>
        <TabRow $h={26}>
          <TabGroup>
            {TAB_ROW_ONE.map(([t, w, tone, small]) => (
              <Tab key={t} $w={w} $tone={tone} $small={small}>{t}</Tab>
            ))}
          </TabGroup>
          <TabGroup>
            <Tab $w={26}>+</Tab>
            <Tab $w={24}>-</Tab>
            <Tab $w={27}>0</Tab>
          </TabGroup>
        </TabRow>
        <TabRow $h={28}>
          <TabGroup>
            {TAB_ROW_TWO.map(([t, w, tone]) => (
              <Tab key={t} $w={w} $tone={tone}>{t}</Tab>
            ))}
          </TabGroup>
          <TabGroup>
            <Tab $w={73}>图文F10</Tab>
            <Tab $w={77} $tone="yellow">侧边栏&lt;</Tab>
          </TabGroup>
        </TabRow>
      </Workspace>
      <QuotePanel>
        <NameRow>中电电机<b>603988</b></NameRow>
        <PriceRow>
          12.78<PriceUnit>元</PriceUnit>
          <UpTriangle />1.16
          <PriceRight>9.98%</PriceRight>
        </PriceRow>
        <Book $rule="#b08030">
          {SELLS.map((s, i) => (
            <BookRow key={s}>{s}{i === 0 && <span>¥</span>}</BookRow>
          ))}
        </Book>
        <Book $rule={LINE}>
          {BUYS.map(([label, price, volume, big]) => (
            <BookRow key={label}>
              {label}
              <BookPrice $big={big}>{price}</BookPrice>
              <BookVolume>{volume}<Unit>万</Unit></BookVolume>
            </BookRow>
          ))}
        </Book>
        <StatGrid rows={STATS_A} h={145} />
        <StatGrid rows={STATS_B} h={91} />
        <Flows>
          {FLOWS.map(([label, bar, amount, pct, wide]) => (
            <FlowRow key={label}>
              <FlowLabel>{label}</FlowLabel>
              <FlowBar><div style={{ width: bar }} /></FlowBar>
              <FlowAmount $wide={wide}>{amount}<Unit>万</Unit></FlowAmount>
              <FlowPct>{pct}</FlowPct>
            </FlowRow>
          ))}
        </Flows>
        <TickList>
          {TICKS.map(([time, rows], g) => (
            <TickGroup key={time} $last={g === TICKS.length - 1}>
              {rows.map(([vol, count, noSide], i) => (
                <TickRow key={i}>
                  <TickTime>{i === 0 ? time : ''}</TickTime>
                  <TickPrice>12.78</TickPrice>
                  <TickVolume>{vol}<Unit>万</Unit></TickVolume>
                  <TickSide>{noSide ? '' : 'S'}</TickSide>
                  <TickCount>{count}</TickCount>
                </TickRow>
              ))}
            </TickGroup>
          ))}
        </TickList>
        <PanelTabs>
          {['笔', '价', '细', '势', '联', '值', '主', '筹'].map((t, i) => (
            <PanelTab key={t} $active={i === 0}>{t}</PanelTab>
          ))}
        </PanelTabs>
      </QuotePanel>
      <SideTools>
        {SIDE_ICONS.map((icon, i) => (icon ? <SideItem key={i}>{icon}</SideItem> : <SideRule key={i} />))}
        {SIDE_LABELS.map((t) => <SideItem key={t}>{t}</SideItem>)}
      </SideTools>
    </Body>
    <StatusBar>
      <svg width="23" height="26" viewBox="0 0 23 26">
        <rect x="1" y="2" width="20" height="22" rx="3" fill="#f0b020" stroke="#b88020" />
        <rect x="6" y="7" width="10" height="12" fill="#ffe080" stroke="#d09020" />
      </svg>
      {INDEXES.map(([name, value, change, pct, amount]) => (
        <IndexBlock key={name}>
          <IndexName>{name}</IndexName>
          <RedNum>{value}</RedNum>
          <RedNum>{change}</RedNum>
          <RedNum>{pct}</RedNum>
          <DarkNum>{amount}<span>亿</span></DarkNum>
        </IndexBlock>
      ))}
      <TotalBlock>
        总成交
        <DarkNum>6102<span>亿</span></DarkNum>
      </TotalBlock>
      <FeedName>高级行情_上海双线6</FeedName>
      <Tray>
        <svg width="22" height="22" viewBox="0 0 22 22"><rect x="1" y="2" width="20" height="18" rx="3" fill="#e8f0fc" stroke="#6a98d8" /><path d="M7 13h8M7 15h8" stroke="#e0b020" /></svg>
        <svg width="22" height="24" viewBox="0 0 22 24"><rect x="2" y="2" width="18" height="20" fill="#f4f4f4" stroke="#999" /><path d="M4 6h14M4 10h14M4 14h14M4 18h14" stroke="#bbb" /></svg>
        <svg width="20" height="24" viewBox="0 0 20 24"><rect x="1" y="1" width="18" height="22" rx="8" fill="#e8e030" stroke="#a0a020" /><path d="M10 5l4 6h-8zM8 11h4v6H8z" fill="#807000" /></svg>
        <svg width="20" height="28" viewBox="0 0 20 28"><path d="M10 10L6 27M10 10l4 17M7 20h6" stroke="#666" fill="none" /><path d="M6 4a6 6 0 0 0 0 8M14 4a6 6 0 0 1 0 8M3 2a10 10 0 0 0 0 12M17 2a10 10 0 0 1 0 12" stroke="#90a020" fill="none" strokeWidth="1.4" /></svg>
        <svg width="14" height="26" viewBox="0 0 14 26"><path d="M7 2l5 8H2zM7 10l5 8H2zM2 20h10v4H2z" fill="#808080" /></svg>
        <svg width="8" height="22" viewBox="0 0 8 22"><path d="M4 4v9" stroke="#707070" strokeWidth="3" /><circle cx="4" cy="18" r="1.6" fill="#707070" /></svg>
      </Tray>
    </StatusBar>
  </Root>
);

export default App;
